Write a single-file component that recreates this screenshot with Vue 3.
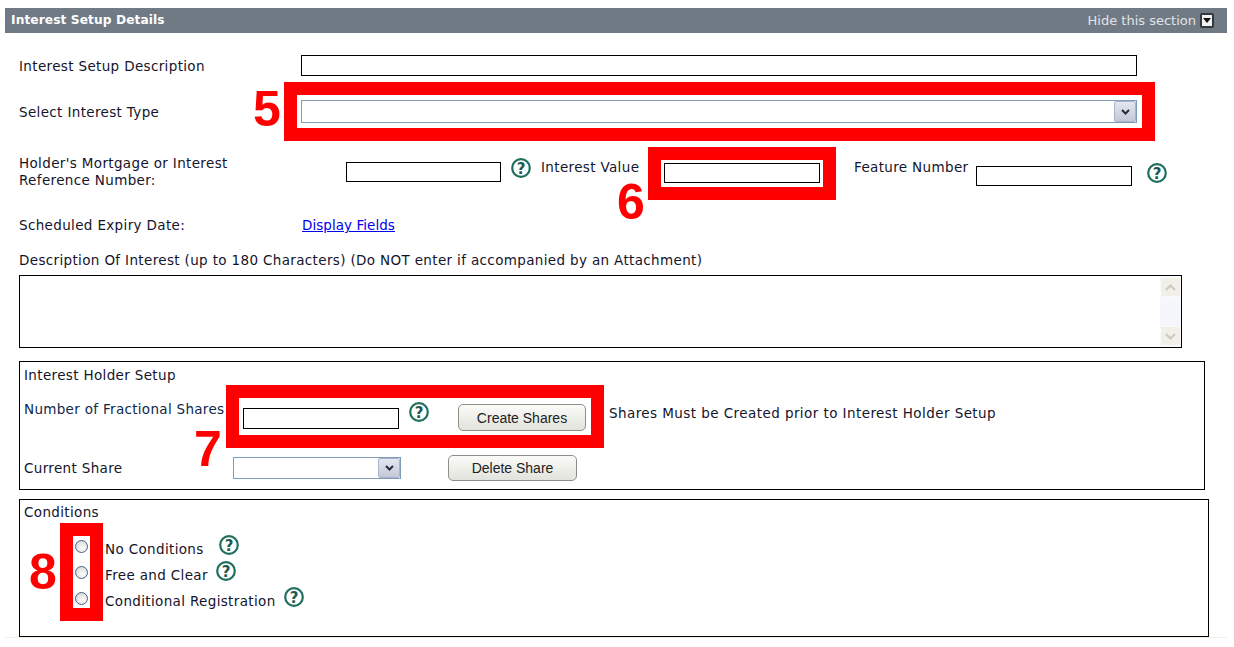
<template>
  <div class="page">
    <div class="section-bar">
      <span class="section-title">Interest Setup Details</span>
      <span class="section-toggle">
        Hide this section
        <span class="toggle-icon"><i></i></span>
      </span>
    </div>

    <div class="form">
      <div class="row row-desc">
        <label class="label-col">Interest Setup Description</label>
        <input class="field field-wide" type="text" />
      </div>

      <div class="row row-type">
        <label class="label-col">Select Interest Type</label>
        <div class="select select-wide">
          <span class="select-btn">
            <svg width="9" height="6" viewBox="0 0 9 6"><path d="M1 1l3.5 3.5L8 1" fill="none" stroke="#2b2b33" stroke-width="2" /></svg>
          </span>
        </div>
      </div>

      <div class="row row-ref">
        <label class="ref-label">Holder's Mortgage or Interest<br />Reference Number:</label>
        <input class="field ref-input" type="text" />
        <svg class="help help-ref" viewBox="0 0 20 20" width="20" height="20">
          <circle cx="10" cy="10" r="8.8" fill="#fff" stroke="#1f6f5f" stroke-width="2.2" />
          <text x="10" y="15.5" text-anchor="middle" class="help-mark">?</text>
        </svg>
        <label class="value-label">Interest Value</label>
        <input class="field value-input" type="text" />
        <label class="feature-label">Feature Number</label>
        <input class="field feature-input" type="text" />
        <svg class="help help-feature" viewBox="0 0 20 20" width="20" height="20">
          <circle cx="10" cy="10" r="8.8" fill="#fff" stroke="#1f6f5f" stroke-width="2.2" />
          <text x="10" y="15.5" text-anchor="middle" class="help-mark">?</text>
        </svg>
      </div>

      <div class="row row-expiry">
        <label class="label-col">Scheduled Expiry Date:</label>
        <a class="link" href="#">Display Fields</a>
      </div>

      <div class="desc-label">Description Of Interest (up to 180 Characters) (Do NOT enter if accompanied by an Attachment)</div>
      <div class="textarea">
        <div class="scrollbar">
          <span class="scroll-btn">
            <svg width="11" height="7" viewBox="0 0 11 7"><path d="M1 6l4.5-4.5L10 6" fill="none" stroke="#c9c9c2" stroke-width="2" /></svg>
          </span>
          <span class="scroll-btn">
            <svg width="11" height="7" viewBox="0 0 11 7"><path d="M1 1l4.5 4.5L10 1" fill="none" stroke="#c9c9c2" stroke-width="2" /></svg>
          </span>
        </div>
      </div>

      <div class="box holder-box">
        <div class="box-title">Interest Holder Setup</div>
        <div class="holder-row holder-shares">
          <label class="shares-label">Number of Fractional Shares</label>
          <input class="field shares-input" type="text" />
          <svg class="help help-shares" viewBox="0 0 20 20" width="20" height="20">
            <circle cx="10" cy="10" r="8.8" fill="#fff" stroke="#1f6f5f" stroke-width="2.2" />
            <text x="10" y="15.5" text-anchor="middle" class="help-mark">?</text>
          </svg>
          <button class="btn create-btn">Create Shares</button>
          <span class="shares-note">Shares Must be Created prior to Interest Holder Setup</span>
        </div>
        <div class="holder-row holder-current">
          <label class="current-label">Current Share</label>
          <div class="select select-share">
            <span class="select-btn">
              <svg width="9" height="6" viewBox="0 0 9 6"><path d="M1 1l3.5 3.5L8 1" fill="none" stroke="#2b2b33" stroke-width="2" /></svg>
            </span>
          </div>
          <button class="btn delete-btn">Delete Share</button>
        </div>
      </div>

      <div class="box conditions-box">
        <div class="box-title">Conditions</div>
        <div class="conditions">
          <div v-for="c in conditions" :key="c" class="condition">
            <input class="radio" type="radio" name="conditions" />
            <label class="condition-label">{{ c }}</label>
            <svg class="help" viewBox="0 0 20 20" width="20" height="20">
              <circle cx="10" cy="10" r="8.8" fill="#fff" stroke="#1f6f5f" stroke-width="2.2" />
              <text x="10" y="15.5" text-anchor="middle" class="help-mark">?</text>
            </svg>
          </div>
        </div>
      </div>
    </div>

    <!-- red callouts drawn over the form -->
    <div class="callout c5"></div>
    <div class="callout c6"></div>
    <div class="callout c7"></div>
    <div class="callout c8"></div>
    <span class="num n5">5</span>
    <span class="num n6">6</span>
    <span class="num n7">7</span>
    <span class="num n8">8</span>
  </div>
</template>

<script setup>
const conditions = ['No Conditions', 'Free and Clear', 'Conditional Registration']
</script>

<style>
body {
  margin: 0;
  background: #fff;
}
</style>

<style scoped>
.page {
  position: relative;
  width: 1234px;
  height: 647px;
  padding: 8px 7px 0 5px;
  box-sizing: border-box;
  overflow: hidden;
  font-family: "DejaVu Sans", Verdana, sans-serif;
  font-size: 13.5px;
  letter-spacing: 0.35px;
  line-height: 17px;
  color: #14142b;
}

.section-bar {
  height: 25px;
  background: #707a85;
  display: flex;
  justify-content: space-between;
  align-items: center;
  padding: 0 13px 0 6px;
}

.section-title {
  color: #fff;
  font-weight: bold;
  font-size: 12.2px;
  letter-spacing: 0.1px;
}

.section-toggle {
  display: flex;
  align-items: center;
  gap: 4px;
  color: #e2e4e6;
  font-size: 13px;
  letter-spacing: 0;
}

.toggle-icon {
  width: 14px;
  height: 15px;
  box-sizing: border-box;
  background: #f2f2f2;
  border: 2px solid #34383d;
  border-radius: 2px;
  display: flex;
  align-items: center;
  justify-content: center;
}

.toggle-icon i {
  width: 0;
  height: 0;
  border-left: 4px solid transparent;
  border-right: 4px solid transparent;
  border-top: 5px solid #111;
}

.form {
  padding-left: 14px;
  border-bottom: 1px solid #efefe2;
}

.row {
  display: flex;
  align-items: flex-start;
}

.label-col {
  width: 282px;
  flex: none;
}

.field {
  box-sizing: border-box;
  display: block;
  flex: none;
  height: 21px;
  margin: 0;
  padding: 0 2px;
  border: 1px solid #000;
  background: #fff;
}

.field-wide {
  width: 836px;
}

.row-desc {
  margin-top: 22px;
}

.row-desc .label-col {
  margin-top: 3px;
}

.row-type {
  margin-top: 24px;
}

.row-type .label-col {
  margin-top: 4px;
}

.select {
  box-sizing: border-box;
  height: 23px;
  border: 1px solid #7f9db9;
  background: #fff;
  display: flex;
  justify-content: flex-end;
  flex: none;
}

.select-wide {
  width: 836px;
}

.select-btn {
  width: 22px;
  box-sizing: border-box;
  border: 1px solid #a9b4cc;
  border-radius: 2px;
  background: linear-gradient(#e4e7f2, #c3c8d8);
  display: flex;
  align-items: center;
  justify-content: center;
}

.row-ref {
  margin-top: 32px;
  height: 40px;
}

.ref-label {
  width: 327px;
  flex: none;
}

.ref-input {
  width: 155px;
  height: 20px;
  margin-top: 7px;
}

.help {
  display: block;
  flex: none;
}

.help-mark {
  font-family: "DejaVu Sans", Verdana, sans-serif;
  font-size: 15px;
  letter-spacing: 0;
  font-weight: bold;
  fill: #1c5a4e;
}

.help-ref {
  margin: 3px 0 0 10px;
}

.value-label {
  width: 99px;
  flex: none;
  white-space: nowrap;
  margin: 4px 0 0 10px;
}

.value-input {
  width: 156px;
  height: 20px;
  margin: 8px 0 0 24px;
}

.feature-label {
  width: 113px;
  flex: none;
  white-space: nowrap;
  margin: 4px 0 0 34px;
}

.feature-input {
  width: 156px;
  height: 20px;
  margin: 11px 0 0 9px;
}

.help-feature {
  margin: 8px 0 0 15px;
}

.row-expiry {
  margin-top: 22px;
}

.link {
  margin-left: 1px;
  color: #0000ee;
  letter-spacing: 0.05px;
  text-decoration: underline;
}

.desc-label {
  margin-top: 18px;
}

.textarea {
  box-sizing: border-box;
  width: 1163px;
  height: 73px;
  margin-top: 6px;
  border: 1px solid #000;
  display: flex;
  justify-content: flex-end;
}

.scrollbar {
  width: 21px;
  background: #f6f7fd;
  display: flex;
  flex-direction: column;
  justify-content: space-between;
  padding: 1px 0;
}

.scroll-btn {
  height: 20px;
  background: #f0f0e8;
  border: 1px solid #fbfbf6;
  border-radius: 2px;
  box-sizing: border-box;
  display: flex;
  align-items: center;
  justify-content: center;
}

.box {
  box-sizing: border-box;
  border: 1px solid #000;
}

.holder-box {
  width: 1186px;
  height: 129px;
  margin-top: 13px;
  padding: 5px 4px 0;
}

.box-title {
  height: 17px;
}

.holder-row {
  display: flex;
  align-items: flex-start;
}

.holder-shares {
  margin-top: 17px;
  height: 34px;
}

.shares-label {
  width: 219px;
  flex: none;
  white-space: nowrap;
  letter-spacing: 0.31px;
  color: #10284a;
}

.shares-input {
  width: 156px;
  margin-top: 7px;
}

.help-shares {
  margin: 1px 0 0 10px;
}

.btn {
  box-sizing: border-box;
  flex: none;
  padding: 0;
  border: 1px solid #8f8f8a;
  border-radius: 5px;
  background: linear-gradient(#fbfbf8, #e3e3dd);
  font-family: "Liberation Sans", Arial, sans-serif;
  font-size: 14px;
  letter-spacing: 0;
  color: #222;
}

.create-btn {
  width: 128px;
  height: 27px;
  margin: 3px 0 0 29px;
}

.shares-note {
  margin: 4px 0 0 23px;
  letter-spacing: 0.43px;
}

.holder-current {
  margin-top: 20px;
}

.current-label {
  width: 209px;
  flex: none;
  margin-top: 5px;
}

.select-share {
  width: 168px;
  height: 22px;
  margin-top: 2px;
}

.delete-btn {
  width: 129px;
  height: 26px;
  margin-left: 47px;
}

.conditions-box {
  width: 1190px;
  height: 138px;
  margin-top: 9px;
  padding: 4px 4px 0;
}

.conditions {
  margin-top: 19px;
}

.condition {
  display: flex;
  align-items: flex-start;
  height: 26px;
  padding-left: 51px;
}

.radio {
  appearance: none;
  box-sizing: border-box;
  flex: none;
  width: 13px;
  height: 13px;
  margin: 0 17px 0 0;
  border: 1px solid #456385;
  border-radius: 50%;
  background: radial-gradient(circle at 60% 65%, #fff, #cdcdc9);
}

.condition-label {
  margin: 1px 8px 0 0;
}

.condition:first-child .condition-label {
  margin-right: 15px;
}

.condition .help {
  margin-top: -5px;
}

/* annotations */
.callout {
  position: absolute;
  box-sizing: border-box;
  border: 13px solid #ff0000;
  pointer-events: none;
}

.c5 {
  left: 284px;
  top: 82px;
  width: 871px;
  height: 59px;
}

.c6 {
  left: 648px;
  top: 147px;
  width: 188px;
  height: 53px;
}

.c7 {
  left: 226px;
  top: 385px;
  width: 378px;
  height: 63px;
}

.c8 {
  left: 60px;
  top: 523px;
  width: 43px;
  height: 98px;
}

.num {
  position: absolute;
  font-family: "Liberation Sans", Arial, sans-serif;
  font-size: 50px;
  letter-spacing: 0;
  line-height: 50px;
  font-weight: bold;
  color: #ff0000;
}

.n5 {
  left: 253px;
  top: 84px;
}

.n6 {
  left: 617px;
  top: 177px;
}

.n7 {
  left: 194px;
  top: 424px;
}

.n8 {
  left: 29px;
  top: 547px;
}
</style>
